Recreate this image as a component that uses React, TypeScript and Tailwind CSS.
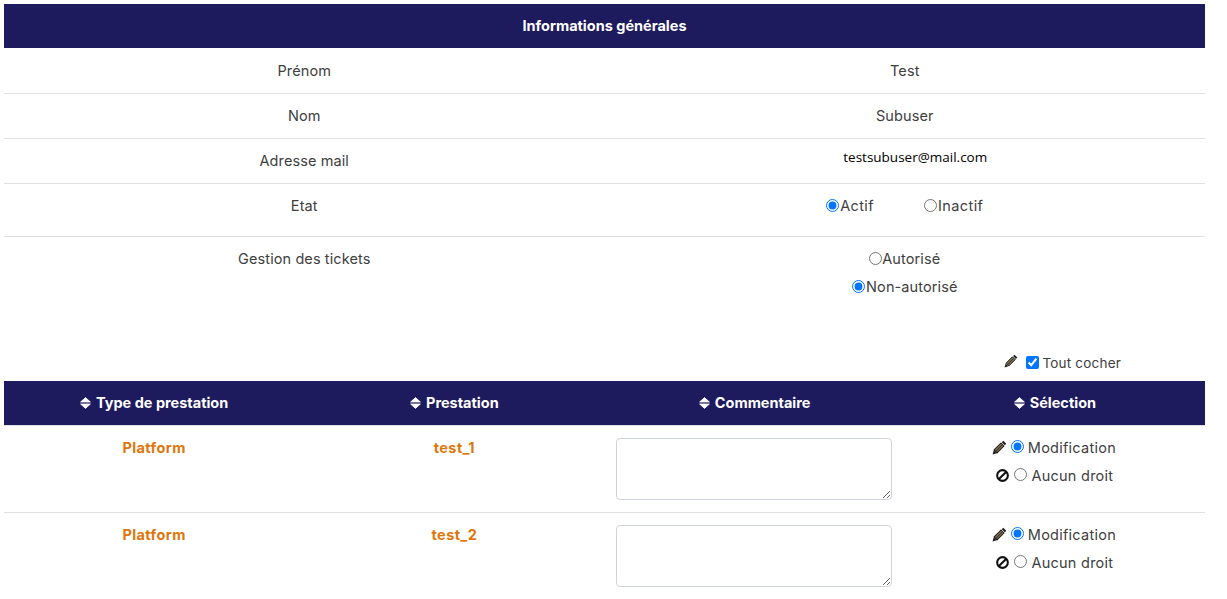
import type { ReactNode } from "react";

const font = "font-['Inter','Noto_Sans',sans-serif]";

function PencilIcon({ className }: { className?: string }) {
  return (
    <svg viewBox="0 0 16 16" className={className}>
      <path d="M12 .8 15.2 4 13.6 5.6 10.4 2.4Z" fill="#1c1c1c" />
      <path d="M9.6 3.2 12.8 6.4 5.4 13.8 2.2 10.6Z" fill="#7d6a4f" stroke="#1c1c1c" strokeWidth="1.1" strokeLinejoin="round" />
      <path d="M4 12.4 10.8 5.2" stroke="#1c1c1c" strokeWidth="0.8" />
      <path d="M1.9 11 5 14.1.6 15.4Z" fill="#1c1c1c" />
    </svg>
  );
}

function BanIcon({ className }: { className?: string }) {
  return (
    <svg viewBox="0 0 16 16" className={className} fill="none" stroke="#111" strokeWidth="2.5">
      <circle cx="8" cy="8" r="6.6" />
      <path d="M3.6 12.4 12.4 3.6" />
    </svg>
  );
}

function SortIcon() {
  return (
    <svg viewBox="0 0 11 12" className="h-[12px] w-[11px]" fill="#fff" stroke="#fff" strokeWidth="0.8" strokeLinejoin="round">
      <path d="M5.5.6 10.4 5H.6Z" />
      <path d="M.6 7H10.4L5.5 11.4Z" />
    </svg>
  );
}

function InfoRow({ label, value, className }: { label: string; value: ReactNode; className?: string }) {
  return (
    <div className={`grid grid-cols-2 border-t border-[#dee2e6] text-center text-[14.5px] leading-[21px] tracking-[0.1px] text-[#404040] ${className ?? ""}`}>
      <div>{label}</div>
      <div>{value}</div>
    </div>
  );
}

function SortHead({ label }: { label: string }) {
  return (
    <div className="flex items-center justify-center gap-[5px] pb-[1px]">
      <SortIcon />
      <span>{label}</span>
    </div>
  );
}

function PrestationRow({ type, name, group }: { type: string; name: string; group: string }) {
  return (
    <div className="grid h-[87px] grid-cols-4 border-t border-[#dee2e6] text-center text-[14.5px] leading-[21px]">
      <div className="pt-[11px] font-bold tracking-[0.4px] text-[#e0760b]">{type}</div>
      <div className="pt-[11px] font-bold tracking-[0.4px] text-[#e0760b]">{name}</div>
      <div className="flex justify-center pr-[2px] pt-[12px]">
        <textarea className="h-[62px] w-[276px] rounded-[4px] border border-[#ced4da] bg-white" />
      </div>
      <div className="pt-[11px] tracking-[0.25px] text-[#404040]">
        <div className="flex h-[20px] items-center justify-center gap-[4px] pr-[2px]">
          <PencilIcon className="h-[15px] w-[15px]" />
          <input type="radio" name={group} defaultChecked className="m-0 mb-[2px] h-[13px] w-[13px]" />
          <span>Modification</span>
        </div>
        <div className="mt-[8px] flex h-[20px] items-center justify-center gap-[4px]">
          <BanIcon className="mr-[1px] h-[13px] w-[13px]" />
          <input type="radio" name={group} className="m-0 mb-[2px] h-[13px] w-[13px]" />
          <span>Aucun droit</span>
        </div>
      </div>
    </div>
  );
}

export default function App() {
  return (
    <div className={`h-[599px] overflow-hidden bg-white pl-[4px] pr-[22px] pt-[4px] ${font}`}>
      <div className="flex h-[44px] items-center justify-center bg-[#1e1a5e] pb-[1px] text-[14.5px] font-bold text-white">
        Informations générales
      </div>
      <InfoRow label="Prénom" value="Test" className="h-[45px] border-t-0 pt-[12px]" />
      <InfoRow label="Nom" value="Subuser" className="h-[45px] pt-[11px]" />
      <InfoRow
        label="Adresse mail"
        value={<span className="-mt-[3px] block pl-[21px] font-['Open_Sans',sans-serif] text-[13.5px] font-medium tracking-normal text-black">testsubuser@mail.com</span>}
        className="h-[45px] pt-[11px]"
      />
      <InfoRow
        label="Etat"
        className="h-[53px] pt-[11px]"
        value={
          <div className="flex items-center justify-center gap-[50px] tracking-[0.4px]">
            <label className="flex items-center">
              <input type="radio" name="etat" defaultChecked className="m-0 h-[13px] w-[13px]" />
              <span className="ml-[1px]">Actif</span>
            </label>
            <label className="flex items-center">
              <input type="radio" name="etat" className="m-0 h-[13px] w-[13px]" />
              <span className="ml-[1px]">Inactif</span>
            </label>
          </div>
        }
      />
      <InfoRow
        label="Gestion des tickets"
        className="h-[108px] pt-[11px]"
        value={
          <div className="flex flex-col items-center gap-[8px]">
            <label className="flex h-[20px] items-center">
              <input type="radio" name="tickets" className="m-0 h-[13px] w-[13px]" />
              Autorisé
            </label>
            <label className="flex h-[20px] items-center">
              <input type="radio" name="tickets" defaultChecked className="m-0 h-[13px] w-[13px]" />
              <span className="ml-[1px]">Non-autorisé</span>
            </label>
          </div>
        }
      />
      <div className="flex h-[37px] items-center justify-end gap-[8px] pr-[84px] text-[13.5px] tracking-[0.2px] text-[#404040]">
        <PencilIcon className="mb-[4px] h-[14px] w-[14px]" />
        <label className="flex items-center gap-[3px]">
          <input type="checkbox" defaultChecked className="m-0 h-[13px] w-[13px]" />
          <span className="mt-[2px]">Tout cocher</span>
        </label>
      </div>
      <div className="grid h-[44px] grid-cols-4 items-center bg-[#1e1a5e] text-[14.5px] font-bold text-white">
        <SortHead label="Type de prestation" />
        <SortHead label="Prestation" />
        <SortHead label="Commentaire" />
        <SortHead label="Sélection" />
      </div>
      <PrestationRow type="Platform" name="test_1" group="sel1" />
      <PrestationRow type="Platform" name="test_2" group="sel2" />
    </div>
  );
}
